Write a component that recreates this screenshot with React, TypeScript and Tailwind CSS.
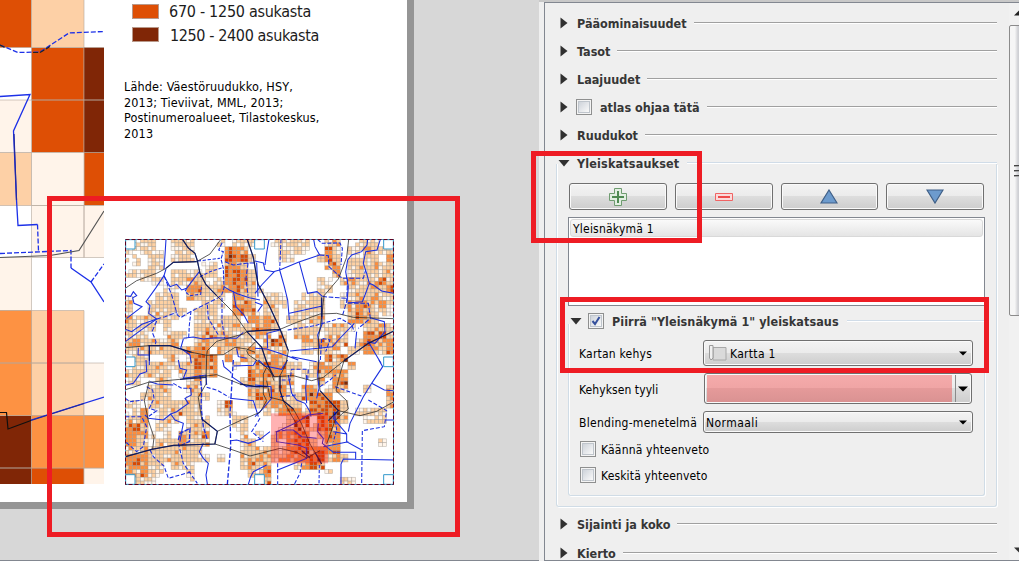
import React from "react";

const DENSITY = [
  ".112..222...1.222" + "..12222..33..122..",
  "11221.222....543." + "...2221..53.123222",
  "11.21.122....5452" + "...22...243.2232.4",
  ".1.22.....12.443." + ".........34.233322",
  "1222..122222.5542" + "..........4.222222",
  "..112.22332224543" + "........21.3332343",
  ".....22.452244542" + "1.......12..222335",
  "1...222.33222.432" + ".221..222..2232422",
  "3..2222...222.443" + ".232.2222..2344342",
  "2..23222.222..444" + "122..2222...343221",
  "3232222..232222.4" + "443.22233...4533..",
  "2223.2...23232323" + "443..22222332.2343",
  "223..222.33333232" + "33.3.332.332..4452",
  "3423334..34334322" + ".354..444333.35434",
  "22332223445.33324" + "2433..32233.224424",
  ".23..23.3545.3.43" + "3343.....535......",
  ".22232233544..1.3" + "454422.3433.4.....",
  "322222.32433....4" + "45343.233344......",
  "22..22..23.....35" + "34234...4.45......",
  "...233..33......4" + "43343.44.233..2..3",
  "..2222..232.....3" + "5444334554.......4",
  "21.2322222..15..2" + "334432.54552.....3",
  "114.223322..131.." + ".11454245562.1232.",
  "334.232.222...22." + "....355.5553..121.",
  "453.21..233...12." + "...13532554.......",
  "4441.2.4234....2." + "1.23455.354.......",
  "442.3234333....33" + "..2.4553.44.....1.",
  "3233323322.....32" + "33324554544.......",
  "45422322321.1..33" + "442344556343......",
  "45422.322......24" + "34...2454.........",
  "43421...2.......3" + "24.......1........",
  ".321....1........" + ".3.........22.....",
];

const SHADES = ["#fff5eb", "#fdd0a2", "#fd8d3c", "#d94801", "#7f2704"];

function noise(x: number, y: number) {
  const v = Math.sin(x * 12.9898 + y * 78.233) * 43758.5453;
  return v - Math.floor(v);
}

function shadeFor(level: number, n: number) {
  if (level === 1) return n < 0.3 ? -1 : n < 0.75 ? 0 : 1;
  if (level === 2) return n < 0.05 ? -1 : n < 0.28 ? 0 : n < 0.99 ? 1 : 2;
  if (level === 3) return n < 0.14 ? 0 : n < 0.76 ? 1 : n < 0.99 ? 2 : 3;
  if (level === 4) return n < 0.18 ? 1 : n < 0.9 ? 2 : 3;
  if (level === 5) return n < 0.42 ? 2 : n < 0.94 ? 3 : 4;
  return n < 0.5 ? 3 : 4;
}

function DensityCells() {
  const cells: React.ReactNode[] = [];
  const s = 11.53;
  for (let y = 0; y < 64; y++) {
    for (let x = 0; x < 70; x++) {
      const c = DENSITY[y >> 1][x >> 1];
      if (!c || c === ".") continue;
      const k = shadeFor(Number(c), noise(x + 1, y + 1));
      if (k < 0) continue;
      cells.push(
        <rect key={`${x}-${y}`} x={x * s} y={y * s} width={s} height={s} fill={SHADES[k]} />
      );
    }
  }
  return (
    <g stroke="#a09890" strokeWidth="2" strokeOpacity="0.6">
      {cells}
    </g>
  );
}

function OverviewMap() {
  return (
    <svg width="269" height="246" viewBox="0 0 807 738" className="block">
      <rect width="807" height="738" fill="#fff" />
      <DensityCells />
      <g fill="none" stroke="#1a2fe0" strokeWidth="3.2">
        <g transform="translate(-15 -12)">
          <path d="M138 13 135 60 132 102" />
          <path d="M292 190 305 180 312 158 310 100 303 72 310 50 296 45 308 20" strokeDasharray="12 4" />
          <path d="M312 155 330 166 352 176 388 188 420 195M340 168 348 215 372 240 385 265 M410 84 412 130 414 185" />
          <path d="M315 80 340 90 385 84 410 84M384 84 378 130 384 182" strokeDasharray="14 5" />
          <path d="M138 102 132 122 150 155 170 148 185 165 200 160 215 140 238 110" />
          <path d="M132 122 108 158 78 200 90 212 86 235 110 252 66 283 16 320" />
          <path d="M16 182 32 184 40 170 50 182 38 188 42 205 66 215 20 250M16 283 35 290 66 268 110 252" />
          <path d="M132 122 155 180 172 240 182 248 215 228 292 190M110 252 135 245 170 232M110 258 96 290 108 320 105 330" strokeDasharray="14 6" />
          <path d="M213 228 208 270 206 310M262 210 265 250 280 275 295 300M306 188 306 260 314 310" strokeDasharray="12 5" />
          <path d="M190 310 220 306 250 312 285 308 350 310 370 292 M190 312 182 340 210 360 214 385M88 333 88 390" />
          <path d="M200 160 195 170 210 182 242 178 245 150M240 125 270 110 308 98M233 78 300 70" strokeDasharray="10 5" />
          <path d="M55 338 54 360 88 360M350 340 355 365 380 370" />
        </g>
        <g transform="translate(390 -12)">
          <path d="M0 78 25 84 30 105 55 110 74 105 130 82 194 60 180 35 176 13M42 13 34 60 30 90M133 82 158 175 186 170 202 184M74 105 88 155 98 195 103 255M103 235 202 213M58 110 20 150 0 175M0 202 22 210 8 230M200 190 201 268 188 300 194 340" />
          <path d="M78 13 74 105M98 285 180 272 255 250 290 270 298 290M188 13 200 25 255 24 262 40 258 90" strokeDasharray="12 5" />
          <path d="M194 60 220 62 222 95 255 125 265 130 325 130 332 105M202 184 218 186 275 190M263 240 275 200 278 130M278 204 340 205 346 250 310 280" strokeDasharray="14 5" />
          <path d="M376 13 366 45 332 50 325 85 335 115 343 145 355 150 380 168 415 175M343 145 330 180 322 200 278 204M278 75 272 110 280 155 276 200M278 75 290 60 320 50 336 30 338 13" />
          <path d="M298 265 250 315 232 335 190 340 105 348M0 340 35 342 74 355 130 375M110 365 185 380M300 340 305 290M38 340 36 295 75 285M340 320 378 385M346 248 388 260 390 290 360 325 336 320" />
          <path d="M196 375 200 310 225 315 212 350" strokeDasharray="12 5" />
        </g>
        <g transform="translate(-15 363)">
          <path d="M78 0 80 35 60 42 40 70 16 76M90 65 112 72 160 75M175 0 180 25 200 30 190 55 258 45 260 75" />
          <path d="M16 115 30 125 68 120M80 80 98 90 102 115 88 145 110 152 85 170M160 70 185 85 215 85" strokeDasharray="12 5" />
          <path d="M212 85 214 105 195 115 205 130 170 155 152 162 165 180 190 190 185 215 180 245M152 162 130 180 85 175 75 165" />
          <path d="M240 45 245 90 243 140 246 165 250 200 262 240M175 240 180 220 210 205 208 245 185 255" strokeWidth="4" strokeDasharray="14 4" />
          <path d="M340 0 335 80 330 160 332 260 322 373" strokeWidth="4" strokeDasharray="14 6" />
          <path d="M330 115 400 122 415 170M332 242 350 240 385 250 420 238 450 215M308 0 312 20 330 35 334 40" />
          <path d="M260 82 290 90 328 112M16 170 65 170 80 200 70 260 50 275 16 245M175 250 190 310 232 370M90 270 100 290 132 318 145 355 215 335M420 175 395 215 430 245" strokeDasharray="12 6" />
          <path d="M250 250 238 275 250 295 265 310 258 345 262 372M385 373 392 350 400 335 440 315M340 18 400 16 410 0M335 50 380 80 420 80" />
        </g>
        <g transform="translate(390 363)">
          <path d="M10 0 30 18 80 28 98 0M0 75 48 80 50 115 20 150 0 170M100 45 110 100 125 120 150 130 165 155 168 170M155 45 152 85 155 130M192 0 188 45 192 85 185 115" />
          <path d="M80 60 105 60 110 28 160 28 158 60M75 110 125 105M240 80 325 110 M340 120 395 152 388 200 322 212 320 373M195 80 225 60 242 45M62 215 95 210M68 310 68 373M140 310 135 340 118 373" strokeDasharray="12 6" />
          <path d="M372 0 383 20 350 70 325 110 285 190 280 215M350 70 388 90 415 92M65 215 65 245 130 255 155 265 155 295 68 330" />
          <path d="M245 155 235 175 275 222 275 245 320 270M235 215 275 222M205 260 280 245M220 265 235 277 M235 277H302V297M258 373V312L265 297 415 300M392 180 415 180" />
          <path d="M65 215 120 190 160 165 205 160M190 190 188 215 205 235 202 250 220 265M90 210 115 210 140 230 185 235" />
          <path d="M193 315 192 373M238 155 245 210 235 245" strokeDasharray="10 5" />
        </g>
      </g>
      <g transform="translate(-15 -15)" fill="none">
        <g stroke="#222" strokeWidth="2.800" strokeOpacity="0.8">
          <path d="M188 17 205 42 225 58 232 80 240 118 258 152 290 185 340 235 380 292 425 340 440 385 455 420 462 440" />
          <path d="M382 17 400 70 414 150 450 220 480 285 505 350 498 390 480 425 480 470 490 500 520 525 545 570 570 630 605 690" />
          <path d="M17 162 50 140 110 118 138 103 160 85 230 83 270 60 302 17" />
          <path d="M17 341 85 335 150 335 215 355 260 364 310 362 345 340 380 345 405 355" />
          <path d="M260 364 262 350 290 322 370 300 382 292 480 286 530 265 600 240 650 238 700 250 820 254" />
          <path d="M686 17 680 70 655 135 612 185 605 250 596 310 595 400 600 470 655 530 720 545 770 532 820 504" />
          <path d="M820 292 745 328 672 380 610 430 575 440 520 425 462 428 440 400 385 362 380 350 405 325" />
          <path d="M17 467 85 445 180 436 290 422 360 450 410 458 442 458" />
          <path d="M17 668 95 646 160 634 285 630 345 650 390 666 480 643 530 655 560 672 600 650" />
          <path d="M88 440 73 500 85 560 102 610 98 645M260 364 258 450 235 490 245 555 292 592 284 630M292 592 360 560 420 535 440 500 430 480 430 420 440 400" />
          <path d="M672 380 660 420 648 470 680 500 685 525 665 540 645 560 620 630" />
          <path d="M440 440 450 490 490 500 515 545 530 570" />
        </g>
        <g stroke="#001060" strokeWidth="3.600" strokeOpacity="0.85">
          <path d="M188 17 205 42 225 58 232 80 240 118 258 152 290 185M138 103 160 85 230 83" />
          <path d="M382 17 400 70 414 150 450 220 480 285 505 350M382 292 480 286M380 292 425 340 440 385" />
          <path d="M85 335 150 335 215 355M605 190 605 250M820 292 745 328 672 380M360 450 410 458 442 458" />
          <path d="M180 436 258 430M17 668 95 646 160 634 285 630 292 592 245 555M88 335 88 380" />
          <path d="M440 385 462 428M480 425 480 470 490 500 520 525M600 470 655 530 625 560M545 650 570 672M585 655 605 690" />
        </g>
      </g>
      <rect x="438" y="523" width="171" height="150" fill="#ff0000" fillOpacity="0.3" />
      <g fill="#fff" stroke="#3399cc" strokeWidth="3">
        <path d="M2 2h28v28H2zM389 2h29v28h-29zM776 2h29v28h-29z" />
        <path d="M2 354h28v29H2zM776 354h29v29h-29z" />
        <path d="M2 707h28v29H2zM389 707h29v29h-29zM776 707h29v29h-29z" />
      </g>
      <rect x="1.5" y="1.5" width="804" height="735" fill="none" stroke="#3da0c8" strokeWidth="3" />
      <rect x="1.5" y="1.5" width="804" height="735" fill="none" stroke="#600020" strokeWidth="3" strokeDasharray="12 6" />
    </svg>
  );
}

function MainMap() {
  return (
    <svg width="104" height="484" viewBox="0 0 104 484" className="block shrink-0">
      <rect width="104" height="484" fill="#fff" />
      <g stroke="#b4a89c" strokeOpacity="0.6" strokeWidth="1">
        <path fill="#de4f05" d="M-2-2H31.5V47.5H-2zM31.5 47.5H84V100H31.5zM31.5 100H84V152.5H31.5zM84 152.5H110V205.5H84zM31.5 468H84V490H31.5z" />
        <path fill="#fdd0a6" d="M31.5-2H84V47.5H31.5zM-2 152.5H31.5V205.5H-2zM31.5 310.5H84V363H31.5zM31.5 363H84V415.5H31.5z" />
        <path fill="#802606" d="M84 47.5H110V100H84zM84 100H110V152.5H84zM-2 415.5H31.5V468H-2zM-2 468H31.5V490H-2z" />
        <path fill="#fff4ea" d="M-2 100H31.5V152.5H-2zM31.5 152.5H84V205.5H31.5zM31.5 205.5H84V257.5H31.5zM84 205.5H110V257.5H84zM-2 257.5H31.5V310.5H-2zM84 363H110V415.5H84zM84 468H110V490H84z" />
        <path fill="#fd9243" d="M-2 310.5H31.5V363H-2zM-2 363H31.5V415.5H-2zM31.5 415.5H84V468H31.5zM84 415.5H110V468H84z" />
      </g>
      <g fill="none" stroke="#1c30e8" strokeWidth="1.3">
        <path d="M0 96.500 30 94.500 13.500 131 16.500 200 18 225.500 37.500 224.500" />
        <path d="M0 45 18 52.500 40 52 69 33 104 31.500M37.500 224.500 38.500 251M0 253.500 71 250.500V268M91 282 104 264" strokeDasharray="5 2" />
        <path d="M71 268 91 282 104 302M31 420 104 397" />
      </g>
      <g fill="none" stroke="#222" strokeWidth="1.2">
        <path d="M0 257.500 50 255.500 79 250.500 104 211" stroke="#555" />
        <path d="M0 412.500H6.500L8 429 31 420.500" stroke="#101010" />
        <path d="M31 420.500 84 403.500M14 134 16.500 200" stroke="#2028a0" />
        <path d="M0 45 6 48M33 52.500H40L50 46.500" strokeDasharray="5 2" />
      </g>
    </svg>
  );
}

function Check({ checked = false }: { checked?: boolean }) {
  return (
    <span className="block size-4 shrink-0 border border-[#8e8f8f] bg-[#f4f4f4] p-px">
      <span className="block size-3 border border-[#bfc5cc] bg-linear-to-br from-[#ced3da] to-[#fafafa]">
        {checked && (
          <svg viewBox="0 0 10 10" className="block size-2.5">
            <path d="M1.500 5 4 8 8.500 1" fill="none" stroke="#35509c" strokeWidth="2" />
          </svg>
        )}
      </span>
    </span>
  );
}

function Arrow({ open = false }: { open?: boolean }) {
  return (
    <svg width="12" height="12" viewBox="0 0 12 12" className="block shrink-0">
      <path d={open ? "M.5 3H11.500L6 9.500z" : "M2.500.5 9.500 6 2.500 11.500z"} fill="#303030" />
    </svg>
  );
}

const BOLD = "whitespace-nowrap pt-[2px] font-bold text-[12.5px] text-[#363636] leading-4";

function Section({ title, check = false }: { title: string; check?: boolean }) {
  return (
    <div className="flex h-7 shrink-0 items-center pl-[13px] pr-3">
      <Arrow />
      {check && <span className="ml-[6px] mr-px"><Check /></span>}
      <span className={`${BOLD} ml-[7px] mr-[7px]`}>{title}</span>
      <span className="h-[2px] grow border-t border-[#a0a0a0] bg-white" />
    </div>
  );
}

const BTN = "border border-[#707070] rounded-[3px] bg-[linear-gradient(#f3f3f3,#ebebeb_49%,#dddddd_50%,#cdcdcd)] shadow-[inset_0_0_0_1px_#fafafa]";

function ToolButton({ children }: { children: React.ReactNode }) {
  return <div className={`${BTN} flex h-[27px] grow basis-0 items-center justify-center`}>{children}</div>;
}

function DropArrow() {
  return (
    <svg width="8" height="5" viewBox="0 0 8 5" className="block shrink-0">
      <path d="M0 .5H8L4 4.500z" fill="#000" />
    </svg>
  );
}

function Settings() {
  return (
    <div className="flex h-[561px] w-[480px] shrink-0 flex-col border-t-2 border-[#c8c8c8] bg-[#efefef] pl-[5px]">
      <div className="flex h-[559px] overflow-hidden border-y border-l border-[#828790]">
        <div className="flex w-[464px] shrink-0 flex-col pt-[6px]">
          <Section title="Pääominaisuudet" />
          <Section title="Tasot" />
          <Section title="Laajuudet" />
          <Section title="atlas ohjaa tätä" check />
          <Section title="Ruudukot" />

          <div className="ml-[11px] mr-3 h-[359px] shrink-0">
            <div className="flex h-7 items-center">
              <span className="ml-[2px]"><Arrow open /></span>
              <span className={`${BOLD} ml-[7px] mr-[8px] tracking-[0.150px]`}>Yleiskatsaukset</span>
              <span className="h-[2px] grow border-t border-[#d0dce8] bg-white" />
            </div>
            <div className="-mt-[13px] h-[343px] rounded-b-[3px] border border-t-0 border-[#d0dce6] px-[11px] pt-[19px] shadow-[inset_1px_0_0_#fff,1px_1px_0_#fff]">
              <div className="flex gap-[8px] px-px">
                <ToolButton>
                  <svg width="18" height="18" viewBox="0 0 18 18">
                    <path d="M5.500.5h7v5h5v7h-5v5h-7v-5h-5v-7h5z" fill="#e2efe2" stroke="#6f9c70" />
                    <path d="M9 3V15M3 9H15" stroke="#4f8a52" strokeWidth="2" />
                  </svg>
                </ToolButton>
                <ToolButton>
                  <svg width="18" height="8" viewBox="0 0 18 8">
                    <path d="M.5.5h17v7H.5z" fill="#fbdada" stroke="#f06464" />
                    <path d="M3 4H15" stroke="#ee4b4b" strokeWidth="2" />
                  </svg>
                </ToolButton>
                <ToolButton>
                  <svg width="18" height="15" viewBox="0 0 18 15">
                    <path d="M9 1 17 14H1z" fill="#6d9bcd" stroke="#3f5f87" strokeWidth="1.2" />
                  </svg>
                </ToolButton>
                <ToolButton>
                  <svg width="18" height="15" viewBox="0 0 18 15">
                    <path d="M1 1H17L9 14z" fill="#6d9bcd" stroke="#3f5f87" strokeWidth="1.2" />
                  </svg>
                </ToolButton>
              </div>
              <div className="mt-[7px] h-[89px] border border-[#828790] bg-white p-px">
                <div className="h-[18px] rounded-[3px] border border-[#d9d9d9] bg-linear-to-b from-[#fafafa] to-[#e5e5e5] pl-[2px] text-[12px] leading-[19px] tracking-[0.220px]">
                  Yleisnäkymä 1
                </div>
              </div>
              <div className="flex h-[30px] items-center">
                <span className="ml-[2px]"><Arrow open /></span>
                <span className="ml-[6px]"><Check checked /></span>
                <span className={`${BOLD} ml-[8px] mr-[8px] tracking-[0.060px]`}>Piirrä "Yleisnäkymä 1" yleiskatsaus</span>
                <span className="h-[2px] grow border-t border-[#d0dce8] bg-white" />
              </div>
              <div className="-mt-[12px] flex h-[172px] flex-col rounded-b-[3px] border border-t-0 border-[#d0dce6] pl-[10px] pr-[11px] pt-[16px] text-[12px] shadow-[inset_1px_0_0_#fff,1px_1px_0_#fff]">
                <div className="flex h-[26px] shrink-0 items-center">
                  <span className="w-[124px] pt-px tracking-[0.220px]">Kartan kehys</span>
                  <div className={`${BTN} flex h-[26px] grow items-center pl-[5px] pr-[5px]`}>
                    <svg width="18" height="16" viewBox="0 0 18 16" className="mr-[3px] block">
                      <path d="M4 2.500H17V15H4z" fill="#dadada" stroke="#a8a8a8" />
                      <path d="M.5.5H4V13L2 15 .5 13z" fill="#f0f0f0" stroke="#9a9a9a" />
                    </svg>
                    <span className="grow pt-px tracking-[0.300px]">Kartta 1</span>
                    <DropArrow />
                  </div>
                </div>
                <div className="mt-[7px] flex h-[31px] shrink-0 items-center">
                  <span className="w-[125px] pt-[2px] tracking-[0.080px]">Kehyksen tyyli</span>
                  <div className={`${BTN} mr-px flex h-[31px] grow items-center p-[2px]`}>
                    <div className="h-[27px] grow bg-[linear-gradient(#f5abab,#f0a5a5_49%,#e59a9a_50%,#da9292)]" />
                    <span className="ml-[3px] h-[27px] border-l border-[#8a8a8a]" />
                    <span className="ml-[2px] mr-px">
                      <svg width="10" height="6" viewBox="0 0 10 6" className="block"><path d="M0 .5H10L5 5.500z" fill="#000" /></svg>
                    </span>
                  </div>
                </div>
                <div className="mt-[7px] flex h-[22px] shrink-0 items-center">
                  <span className="w-[124px] whitespace-nowrap pt-px tracking-[0.280px]">Blending-menetelmä</span>
                  <div className={`${BTN} flex h-[22px] grow items-center pl-[2px] pr-[5px]`}>
                    <span className="grow pt-px tracking-[0.450px]">Normaali</span>
                    <DropArrow />
                  </div>
                </div>
                <div className="mt-[8px] flex h-4 shrink-0 items-center gap-[5px] pl-px"><Check /><span className="pt-px tracking-[0.180px]">Käännä yhteenveto</span></div>
                <div className="mt-[10px] flex h-4 shrink-0 items-center gap-[5px] pl-px"><Check /><span className="pt-px tracking-[0.150px]">Keskitä yhteenveto</span></div>
              </div>
            </div>
          </div>

          <div className="mt-[2px] shrink-0"><Section title="Sijainti ja koko" /></div>
          <div className="mt-px shrink-0"><Section title="Kierto" /></div>
        </div>
        <div className="flex w-[10px] shrink-0 flex-col overflow-hidden bg-[#f1f1f1]">
          <div className="h-[22px] pl-[5px] pt-[7px]">
            <svg width="10" height="6" viewBox="0 0 10 6" className="block"><path d="M0 5.500 5 .5 10 5.500z" fill="#222" /></svg>
          </div>
          <div className="flex h-[291px] w-[18px] flex-col items-start justify-center rounded-[2px] border border-[#8b8b8b] bg-linear-to-r from-[#f6f6f6] from-30% to-[#cfd0d4] to-50% pl-[4px]">
            <div className="flex flex-col gap-[3px]">
              <span className="h-[2px] w-2 border-t border-[#444] bg-[#aaa]" />
              <span className="h-[2px] w-2 border-t border-[#444] bg-[#aaa]" />
              <span className="h-[2px] w-2 border-t border-[#444] bg-[#aaa]" />
            </div>
          </div>
          <div className="pl-[5px] pt-[231px]">
            <svg width="10" height="6" viewBox="0 0 10 6" className="block"><path d="M0 .5H10L5 5.500z" fill="#333" /></svg>
          </div>
        </div>
      </div>
    </div>
  );
}

export default function App() {
  return (
    <div className="relative flex h-[561px] w-[1019px] overflow-hidden bg-[#efefef] text-black [font-family:'DejaVu_Sans_Condensed','DejaVu_Sans',sans-serif]">
      <div className="h-[561px] w-[539px] shrink-0 border-b border-[#828790] bg-[#d7d7d7]">
        <div className="flex h-[509px] w-[414px] border-b-[7px] border-r-[7px] border-[#959595] bg-white">
          <MainMap />
          <div className="flex flex-col">
            <div className="flex h-[19px] items-center pl-7 pt-[3px]">
              <span className="h-[15px] w-[27px] border border-[#b9998a] bg-[#de4f05]" />
              <span className="ml-[10px] whitespace-nowrap pt-px text-[16px] leading-4 tracking-[-0.280px] text-[#1c1c1c]">670 - 1250 asukasta</span>
            </div>
            <div className="mt-[4px] flex h-[23px] items-center pl-7">
              <span className="h-[15px] w-[27px] border border-[#b9998a] bg-[#802606]" />
              <span className="ml-[11px] whitespace-nowrap pt-[2px] text-[16px] leading-4 tracking-[-0.380px] text-[#1c1c1c]">1250 - 2400 asukasta</span>
            </div>
            <div className="ml-5 mt-[33px] h-[160px] whitespace-nowrap text-[12.5px] leading-[15.700px] tracking-[0.140px]">
              Lähde: Väestöruudukko, HSY,<br />
              2013; Tieviivat, MML, 2013;<br />
              Postinumeroalueet, Tilastokeskus,<br />
              2013
            </div>
            <div className="ml-[21px]"><OverviewMap /></div>
          </div>
        </div>
      </div>
      <Settings />
      <div className="absolute left-[47px] top-[196px] h-[341px] w-[413px] border-[5px] border-[#ee1c24]" />
      <div className="absolute left-[531px] top-[151px] h-[92px] w-[171px] border-[5px] border-[#ee1c24]" />
      <div className="absolute left-[560px] top-[297px] h-[76px] w-[429px] border-[5px] border-[#ee1c24]" />
    </div>
  );
}
